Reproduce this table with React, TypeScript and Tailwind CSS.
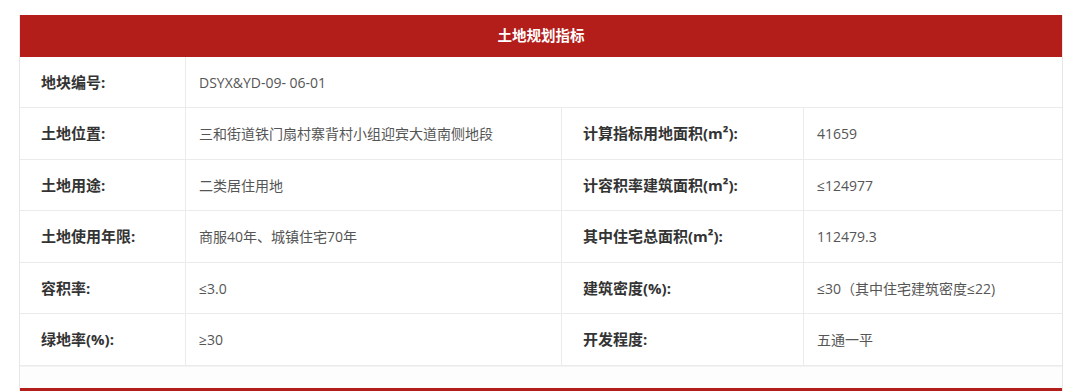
import React from 'react';

type Row = { label: string; value: string; label2?: string; value2?: string };

const rows: Row[] = [
  { label: '地块编号:', value: 'DSYX&YD-09- 06-01' },
  { label: '土地位置:', value: '三和街道铁门扇村寨背村小组迎宾大道南侧地段', label2: '计算指标用地面积(m²):', value2: '41659' },
  { label: '土地用途:', value: '二类居住用地', label2: '计容积率建筑面积(m²):', value2: '≤124977' },
  { label: '土地使用年限:', value: '商服40年、城镇住宅70年', label2: '其中住宅总面积(m²):', value2: '112479.3' },
  { label: '容积率:', value: '≤3.0', label2: '建筑密度(%):', value2: '≤30（其中住宅建筑密度≤22)' },
  { label: '绿地率(%):', value: '≥30', label2: '开发程度:', value2: '五通一平' },
];

const heights = ['h-[51px]', 'h-[52px]', 'h-[51px]', 'h-[52px]', 'h-[51px]', 'h-[52px]'];

export default function App() {
  return (
    <div
      className="bg-white w-[1080px] h-[391px] overflow-hidden pt-[15px] pl-[19px]"
      style={{ fontFamily: '"Segoe UI", "Open Sans", "Noto Sans CJK SC", sans-serif' }}
    >
      <div className="w-[1044px] border-x border-[#e6e6e6] bg-white">
        <div className="h-[42px] bg-[#b31d1a] flex items-center justify-center text-white text-[14.5px] font-bold">
          土地规划指标
        </div>
        {rows.map((r, i) => (
          <div
            key={i}
            className={`flex ${heights[i]} border-b border-[#ebebeb] text-[14px]`}
          >
            <div className="w-[166px] shrink-0 border-r border-[#ebebeb] flex items-center pl-[21px] font-bold text-[15px] text-[#333]">
              {r.label}
            </div>
            {r.label2 ? (
              <>
                <div className="w-[376px] shrink-0 border-r border-[#ebebeb] flex items-center pl-[13px] text-[#555]">
                  {r.value}
                </div>
                <div className="w-[242px] shrink-0 border-r border-[#ebebeb] flex items-center pl-[21px] font-bold text-[15px] text-[#333]">
                  {r.label2}
                </div>
                <div className="flex-1 flex items-center pl-[13px] text-[#555]">{r.value2}</div>
              </>
            ) : (
              <div className="flex-1 flex items-center pl-[13px] text-[#555]">{r.value}</div>
            )}
          </div>
        ))}
        <div className="h-[22px] bg-[#fdfdfd] border-t border-[#f3f3f3]" />
        <div className="h-[10px] bg-[#b31d1a]" />
      </div>
    </div>
  );
}
